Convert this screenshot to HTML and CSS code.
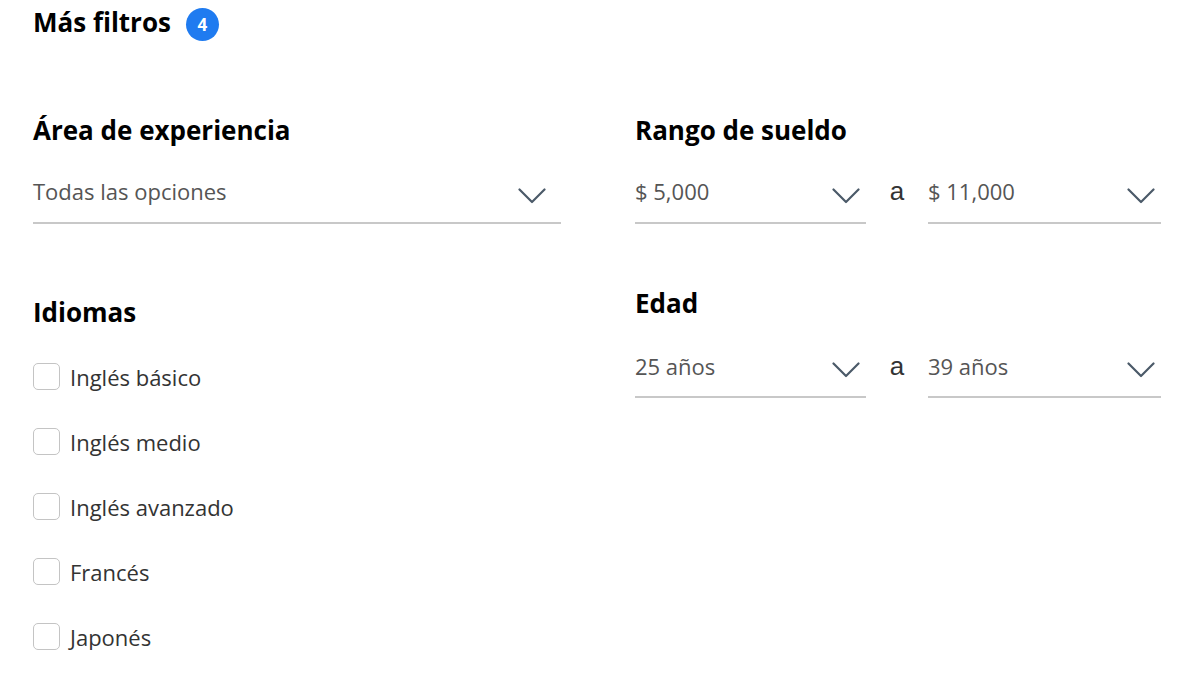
FILE: index.html
```html
<!DOCTYPE html>
<html lang="es">
<head>
<meta charset="utf-8">
<title>Más filtros</title>
<link rel="stylesheet" href="styles.css">
</head>
<body>
<div class="page">
  <header class="title-row">
    <h1 class="title">Más filtros</h1>
    <span class="badge">4</span>
  </header>
  <div class="grid">
    <section class="col-left">
      <div class="group">
        <h2 class="heading">Área de experiencia</h2>
        <div class="select wide">
          <span class="value">Todas las opciones</span>
          <svg class="chev" viewBox="0 0 28 16" width="28" height="16"><path d="M1.5 1.5 L14 14 L26.5 1.5" fill="none" stroke="#4b5a69" stroke-width="2.2" stroke-linecap="round" stroke-linejoin="round"/></svg>
        </div>
      </div>
      <div class="group langs">
        <h2 class="heading">Idiomas</h2>
        <ul class="checks">
          <li class="check"><span class="box"></span><span class="label">Inglés básico</span></li>
          <li class="check"><span class="box"></span><span class="label">Inglés medio</span></li>
          <li class="check"><span class="box"></span><span class="label">Inglés avanzado</span></li>
          <li class="check"><span class="box"></span><span class="label">Francés</span></li>
          <li class="check"><span class="box"></span><span class="label">Japonés</span></li>
        </ul>
      </div>
    </section>
    <section class="col-right">
      <div class="group">
        <h2 class="heading">Rango de sueldo</h2>
        <div class="range">
          <div class="select left">
            <span class="value">$ 5,000</span>
            <svg class="chev" viewBox="0 0 28 16" width="28" height="16"><path d="M1.5 1.5 L14 14 L26.5 1.5" fill="none" stroke="#4b5a69" stroke-width="2.2" stroke-linecap="round" stroke-linejoin="round"/></svg>
          </div>
          <span class="sep">a</span>
          <div class="select right">
            <span class="value">$ 11,000</span>
            <svg class="chev" viewBox="0 0 28 16" width="28" height="16"><path d="M1.5 1.5 L14 14 L26.5 1.5" fill="none" stroke="#4b5a69" stroke-width="2.2" stroke-linecap="round" stroke-linejoin="round"/></svg>
          </div>
        </div>
      </div>
      <div class="group age">
        <h2 class="heading">Edad</h2>
        <div class="range">
          <div class="select left">
            <span class="value">25 años</span>
            <svg class="chev" viewBox="0 0 28 16" width="28" height="16"><path d="M1.5 1.5 L14 14 L26.5 1.5" fill="none" stroke="#4b5a69" stroke-width="2.2" stroke-linecap="round" stroke-linejoin="round"/></svg>
          </div>
          <span class="sep">a</span>
          <div class="select right">
            <span class="value">39 años</span>
            <svg class="chev" viewBox="0 0 28 16" width="28" height="16"><path d="M1.5 1.5 L14 14 L26.5 1.5" fill="none" stroke="#4b5a69" stroke-width="2.2" stroke-linecap="round" stroke-linejoin="round"/></svg>
          </div>
        </div>
      </div>
    </section>
  </div>
</div>
</body>
</html>
```
FILE: styles.css
```css
* { box-sizing: border-box; }
html, body { margin: 0; padding: 0; background: #fff; }
body { font-family: "Open Sans", "Liberation Sans", sans-serif; color: #000; }
.page { padding: 4px 0 0 33px; width: 1195px; }
.title-row { display: flex; align-items: flex-start; gap: 15px; height: 36px; }
.title { margin: 0; font-size: 26px; font-weight: 700; line-height: 36px; }
.badge {
  width: 33px; height: 33px; border-radius: 50%; margin-top: 4px;
  background: #1f7bf0; color: #fff; font-weight: 700; font-size: 17px;
  display: flex; align-items: center; justify-content: center; line-height: 1;
}
.grid { display: grid; grid-template-columns: 528px 526px; column-gap: 74px; margin-top: 72px; }
.heading { margin: 0; font-size: 26px; font-weight: 700; line-height: 36px; }
.select {
  display: flex; align-items: flex-start; justify-content: space-between;
  border-bottom: 2px solid #c8c8c8; height: 76px; padding: 28px 6px 0 0;
}
.select.wide { padding-right: 15px; }
.value { font-size: 22px; color: #555; line-height: 30px; }
.chev { display: block; margin-top: 12px; flex: none; }
.range { display: flex; align-items: stretch; }
.select.left { width: 231px; }
.select.right { width: 233px; }
.sep {
  width: 62px; text-align: center; padding-top: 28px;
  font-family: "Liberation Sans", Arial, sans-serif; font-size: 26px; line-height: 30px; color: #333;
}
.langs { margin-top: 70px; }
.age { margin-top: 61px; }
.age .select { height: 77px; padding-top: 30px; }
.age .sep { padding-top: 30px; }
.age .chev { margin-top: 11px; }
.checks { list-style: none; margin: 33px 0 0; padding: 0; display: flex; flex-direction: column; gap: 38px; }
.check { display: flex; align-items: center; gap: 10px; height: 27px; }
.box { width: 27px; height: 27px; border: 1.5px solid #c4c4c4; border-radius: 5px; flex: none; }
.label { font-size: 22px; color: #333; line-height: 30px; }
```
